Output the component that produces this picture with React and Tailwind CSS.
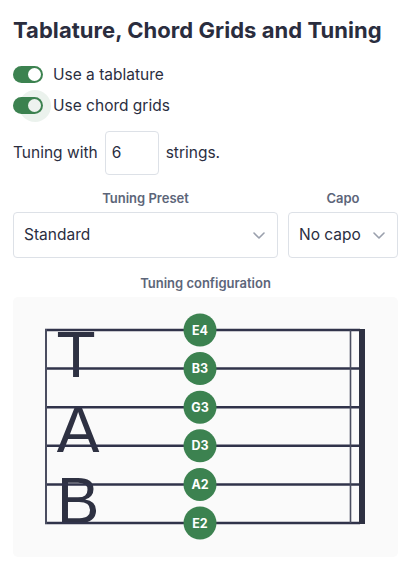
const STRINGS = ['E4', 'B3', 'G3', 'D3', 'A2', 'E2'];

function Toggle({ label, focused }) {
  return (
    <div className="flex items-center gap-[10px] h-[31px]">
      <div className="relative w-[30px] h-[17px] rounded-full bg-[#3c8250]">
        {focused && (
          <div className="absolute w-[32px] h-[32px] rounded-full bg-[#3c8250]/10 left-[6px] top-[-7px]" />
        )}
        <div
          className={`absolute right-[2px] top-[2px] w-[13px] h-[13px] rounded-full ${
            focused ? 'bg-[#eef2ef]' : 'bg-white'
          }`}
        />
      </div>
      <span className="text-[15.5px] text-[#2b2e3f]">{label}</span>
    </div>
  );
}

function Select({ value }) {
  return (
    <div className="flex items-center justify-between h-[46px] border border-[#dde1e7] rounded-[4px] bg-white pl-[10px] pr-[12px]">
      <span className="text-[15.5px] text-[#2b2e3f]">{value}</span>
      <svg width="12" height="7" viewBox="0 0 12 7" fill="none">
        <path d="M1 1l5 5 5-5" stroke="#9aa0ad" strokeWidth="1.6" strokeLinecap="round" strokeLinejoin="round" />
      </svg>
    </div>
  );
}

function Staff() {
  const top = 330;
  const step = 38.6;
  return (
    <svg width="385" height="260" viewBox="13 297 385 260" className="block">
      {/* TAB letters */}
      <g fill="#2e3142" fontFamily="'Liberation Sans', Arial, sans-serif" fontSize="64" textAnchor="middle">
        <text x="76" y="377">T</text>
        <text x="78" y="452">A</text>
        <text x="78" y="523">B</text>
      </g>
      {/* strings */}
      {STRINGS.map((s, i) => (
        <line key={s} x1="45" x2="360" y1={top + i * step} y2={top + i * step} stroke="#30334a" strokeWidth="2.5" />
      ))}
      <line x1="46" x2="46" y1={top - 1} y2={top + 5 * step + 1} stroke="#4a4d60" strokeWidth="2" />
      <line x1="350.5" x2="350.5" y1={top} y2={top + 5 * step} stroke="#4a4d60" strokeWidth="1.6" />
      <rect x="359" y={top - 1} width="6" height={5 * step + 2} fill="#2e3142" />
      {/* tuning notes */}
      {STRINGS.map((s, i) => (
        <g key={s}>
          <circle cx="200" cy={top + i * step} r="16.5" fill="#3c8250" />
          <text
            x="200"
            y={top + i * step + 4.5}
            fill="white"
            fontSize="12.5"
            fontWeight="700"
            textAnchor="middle"
            fontFamily="Inter, sans-serif"
          >
            {s}
          </text>
        </g>
      ))}
    </svg>
  );
}

export default function App() {
  return (
    <div className="w-[418px] h-[580px] bg-white pl-[13px] pr-[20px] pt-[14px] font-['Inter',sans-serif] text-[#2b2e3f]">
      <h1 className="text-[22px] leading-[32px] font-bold text-[#2a2d3e] tracking-[0.05px]">
        Tablature, Chord Grids and Tuning
      </h1>

      <div className="mt-[13px]">
        <Toggle label="Use a tablature" />
        <Toggle label="Use chord grids" focused />
      </div>

      <div className="flex items-center gap-[7px] mt-[10px]">
        <span className="text-[15.5px]">Tuning with</span>
        <div className="w-[54px] h-[44px] border border-[#dde1e7] rounded-[4px] flex items-center pl-[6px] text-[15.5px]">
          6
        </div>
        <span className="text-[15.5px]">strings.</span>
      </div>

      <div className="flex gap-[10px] mt-[15px]">
        <div className="flex-1 flex flex-col">
          <div className="text-[13px] leading-[17px] font-semibold text-[#5c6579] text-center mb-[5px]">
            Tuning Preset
          </div>
          <Select value="Standard" />
        </div>
        <div className="w-[110px] flex flex-col">
          <div className="text-[13px] leading-[17px] font-semibold text-[#5c6579] text-center mb-[5px]">
            Capo
          </div>
          <Select value="No capo" />
        </div>
      </div>

      <div className="text-[13px] leading-[17px] font-semibold text-[#5c6579] text-center mt-[17px]">
        Tuning configuration
      </div>
      <div className="mt-[5px] bg-[#fafafa] rounded-[5px] h-[260px] overflow-hidden">
        <Staff />
      </div>
    </div>
  );
}
